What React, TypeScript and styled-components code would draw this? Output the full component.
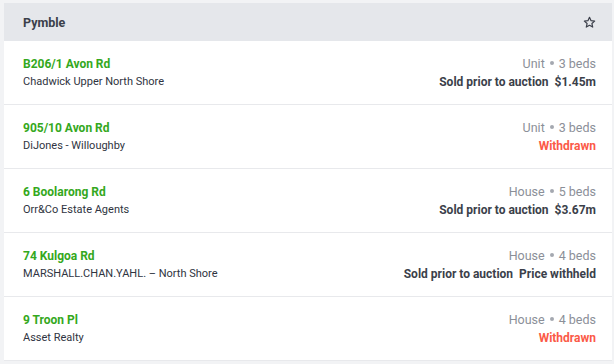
import React from 'react';
import styled, { createGlobalStyle } from 'styled-components';

const GlobalStyle = createGlobalStyle`
  body {
    margin: 0;
    background: #f2f3f5;
    font-family: Roboto, "Noto Sans", sans-serif;
  }
`;

const Page = styled.div`
  padding: 3px 2px 3px 4px;
`;

const Card = styled.div`
  background: #fff;
`;

const Header = styled.div`
  display: flex;
  align-items: center;
  justify-content: space-between;
  height: 38px;
  padding: 0 16px 0 19px;
  background: #e5e7eb;
`;

const HeaderTitle = styled.h3`
  margin: 0;
  font-size: 12.5px;
  font-weight: 700;
  color: #3b3f4a;
`;

const Row = styled.div`
  display: flex;
  align-items: center;
  justify-content: space-between;
  height: 63px;
  padding: 0 16px 0 19px;
  border-bottom: 1px solid #e8e9ec;
`;

const Column = styled.div<{ $right?: boolean }>`
  display: flex;
  flex-direction: column;
  gap: 4px;
  align-items: ${(p) => (p.$right ? 'flex-end' : 'flex-start')};
`;

const Address = styled.span`
  font-size: 12px;
  font-weight: 700;
  color: #34a820;
`;

const Agency = styled.span`
  font-size: 11px;
  color: #2f3441;
`;

const Meta = styled.span`
  display: flex;
  align-items: center;
  font-size: 12.5px;
  line-height: 15px;
  color: #8b8f98;
`;

const Dot = styled.span`
  width: 4px;
  height: 4px;
  border-radius: 50%;
  background: #a4a8b0;
  margin: 0 5px;
`;

const Result = styled.span<{ $withdrawn?: boolean }>`
  font-size: 12px;
  font-weight: 700;
  line-height: 15px;
  color: ${(p) => (p.$withdrawn ? '#fb5a47' : '#3b3f4a')};
`;

const Price = styled.span`
  margin-left: 6px;
`;

const StarIcon = () => (
  <svg width="13" height="13" viewBox="0 0 24 24" fill="none" stroke="#3b3f4a" strokeWidth="2.2" strokeLinejoin="round">
    <path d="M12 2.5l2.9 6.2 6.6.7-5 4.5 1.4 6.6L12 17.2l-5.9 3.3 1.4-6.6-5-4.5 6.6-.7z" />
  </svg>
);

type Sale = {
  address: string;
  agency: string;
  type: string;
  beds: number;
  result: string;
  price?: string;
};

const sales: Sale[] = [
  { address: 'B206/1 Avon Rd', agency: 'Chadwick Upper North Shore', type: 'Unit', beds: 3, result: 'Sold prior to auction', price: '$1.45m' },
  { address: '905/10 Avon Rd', agency: 'DiJones - Willoughby', type: 'Unit', beds: 3, result: 'Withdrawn' },
  { address: '6 Boolarong Rd', agency: 'Orr&Co Estate Agents', type: 'House', beds: 5, result: 'Sold prior to auction', price: '$3.67m' },
  { address: '74 Kulgoa Rd', agency: 'MARSHALL.CHAN.YAHL. – North Shore', type: 'House', beds: 4, result: 'Sold prior to auction', price: 'Price withheld' },
  { address: '9 Troon Pl', agency: 'Asset Realty', type: 'House', beds: 4, result: 'Withdrawn' },
];

export default function App() {
  return (
    <Page>
      <GlobalStyle />
      <Card>
        <Header>
          <HeaderTitle>Pymble</HeaderTitle>
          <StarIcon />
        </Header>
        {sales.map((s) => (
          <Row key={s.address}>
            <Column>
              <Address>{s.address}</Address>
              <Agency>{s.agency}</Agency>
            </Column>
            <Column $right>
              <Meta>
                {s.type}
                <Dot />
                {s.beds} beds
              </Meta>
              <Result $withdrawn={s.result === 'Withdrawn'}>
                {s.result}
                {s.price && <Price>{s.price}</Price>}
              </Result>
            </Column>
          </Row>
        ))}
      </Card>
    </Page>
  );
}
